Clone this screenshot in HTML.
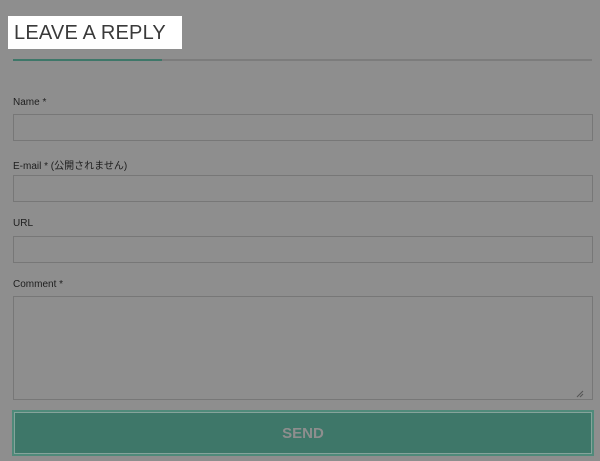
<!DOCTYPE html><html><head><style>
body{margin:0;width:600px;height:461px;background:#8e8e8e;font-family:"Liberation Sans","Noto Sans CJK JP",sans-serif;position:relative;overflow:hidden}
.t{position:absolute;left:8px;top:16px;width:174px;height:33px;background:#fff;font-size:20px;color:#3a3a3a;line-height:34px;padding-left:6px;box-sizing:border-box;letter-spacing:0.2px}
.l1{position:absolute;left:13px;top:59px;width:579px;height:2px;background:#7c7c7c}
.l2{position:absolute;left:13px;top:59px;width:149px;height:2px;background:#3e7769}
.lb{position:absolute;left:13px;font-size:10px;color:#1e1e1e}
.in{position:absolute;left:13px;width:580px;border:1px solid #777;box-sizing:border-box}
.btn{position:absolute;left:12px;top:410px;width:582px;height:46px;border:2px solid #4f8a7a;box-sizing:border-box;background:#3e7769;box-shadow:inset 0 0 0 1px #86a39b;color:#8e8e8e;font-size:15px;font-weight:bold;text-align:center;line-height:44px}
</style></head><body>
<div class="t">LEAVE A REPLY</div>
<div class="l1"></div><div class="l2"></div>
<div class="lb" style="top:97px">Name *</div>
<div class="in" style="top:114px;height:27px"></div>
<div class="lb" style="top:157px">E-mail * (公開されません)</div>
<div class="in" style="top:175px;height:27px"></div>
<div class="lb" style="top:218px">URL</div>
<div class="in" style="top:236px;height:27px"></div>
<div class="lb" style="top:279px">Comment *</div>
<div class="in" style="top:296px;height:104px"></div>
<svg style="position:absolute;left:576px;top:390px" width="8" height="8"><path d="M1 7L7 1M4 7L7 4" stroke="#555" stroke-width="1"/></svg>
<div class="btn">SEND</div>
</body></html>
